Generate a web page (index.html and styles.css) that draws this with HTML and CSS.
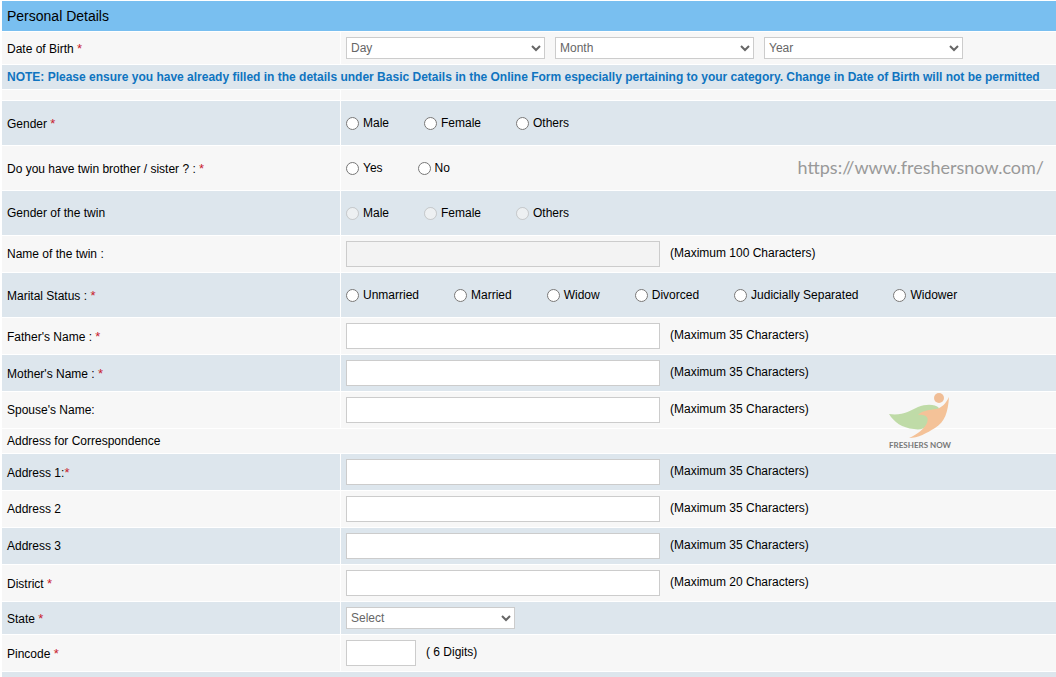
FILE: index.html
```html
<!DOCTYPE html>
<html lang="en">
<head>
<meta charset="utf-8">
<title>Personal Details</title>
<link rel="stylesheet" href="styles.css">
</head>
<body>
<form class="form">
  <h1 class="heading">Personal Details</h1>

  <div class="row">
    <div class="cell name"><label for="day">Date of Birth <span class="req">*</span></label></div>
    <div class="cell field dates">
      <select id="day" class="select" aria-label="Day"><option>Day</option></select>
      <select class="select" aria-label="Month"><option>Month</option></select>
      <select class="select" aria-label="Year"><option>Year</option></select>
    </div>
  </div>

  <p class="cell note">NOTE: Please ensure you have already filled in the details under Basic Details in the Online Form especially pertaining to your category. Change in Date of Birth will not be permitted</p>
  <div class="row spacer"><div class="cell"></div><div class="cell"></div></div>

  <div class="row tint" role="radiogroup" aria-labelledby="gender">
    <div class="cell name" id="gender"><span>Gender <span class="req">*</span></span></div>
    <div class="cell field radios">
      <label class="choice"><input type="radio" name="gender"><span>Male</span></label>
      <label class="choice"><input type="radio" name="gender"><span>Female</span></label>
      <label class="choice"><input type="radio" name="gender"><span>Others</span></label>
    </div>
  </div>

  <div class="row" role="radiogroup" aria-labelledby="twin">
    <div class="cell name" id="twin"><span>Do you have twin brother / sister ? : <span class="req">*</span></span></div>
    <div class="cell field radios">
      <label class="choice"><input type="radio" name="twin"><span>Yes</span></label>
      <label class="choice"><input type="radio" name="twin"><span>No</span></label>
    </div>
    <div class="site">https://www.freshersnow.com/</div>
  </div>

  <div class="row tint" role="radiogroup" aria-labelledby="twin-gender">
    <div class="cell name" id="twin-gender">Gender of the twin</div>
    <div class="cell field radios">
      <label class="choice"><input type="radio" name="twin-gender" disabled><span>Male</span></label>
      <label class="choice"><input type="radio" name="twin-gender" disabled><span>Female</span></label>
      <label class="choice"><input type="radio" name="twin-gender" disabled><span>Others</span></label>
    </div>
  </div>

  <div class="row">
    <div class="cell name"><label for="twin-name">Name of the twin :</label></div>
    <div class="cell field"><input class="text" id="twin-name" type="text" maxlength="100" disabled><span class="hint">(Maximum 100 Characters)</span></div>
  </div>

  <div class="row tint" role="radiogroup" aria-labelledby="marital">
    <div class="cell name" id="marital"><span>Marital Status : <span class="req">*</span></span></div>
    <div class="cell field radios">
      <label class="choice"><input type="radio" name="marital"><span>Unmarried</span></label>
      <label class="choice"><input type="radio" name="marital"><span>Married</span></label>
      <label class="choice"><input type="radio" name="marital"><span>Widow</span></label>
      <label class="choice"><input type="radio" name="marital"><span>Divorced</span></label>
      <label class="choice"><input type="radio" name="marital"><span>Judicially Separated</span></label>
      <label class="choice"><input type="radio" name="marital"><span>Widower</span></label>
    </div>
  </div>

  <div class="row">
    <div class="cell name"><label for="father">Father's Name : <span class="req">*</span></label></div>
    <div class="cell field"><input class="text" id="father" type="text" maxlength="35"><span class="hint">(Maximum 35 Characters)</span></div>
  </div>
  <div class="row tint">
    <div class="cell name"><label for="mother">Mother's Name : <span class="req">*</span></label></div>
    <div class="cell field"><input class="text" id="mother" type="text" maxlength="35"><span class="hint">(Maximum 35 Characters)</span></div>
  </div>
  <div class="row">
    <div class="cell name"><label for="spouse">Spouse's Name:</label></div>
    <div class="cell field"><input class="text" id="spouse" type="text" maxlength="35"><span class="hint">(Maximum 35 Characters)</span></div>
    <div class="brand">
      <svg viewBox="0 0 64 48" width="64" height="48" aria-hidden="true">
        <path fill="#bfdba7" d="M1 22 C14 24 22 19 30 15 C38 12 47 12 51 16 L47 24 L39 34 C36 37 31 38 26 37 C14 36 6 30 1 22 Z"/>
        <path fill="#f4c298" d="M61 5 C60 20 57 30 47 36 C39 41 30 46 21 46 C30 42 36 37 39 31 C41 26 39 22 30 23 C35 18 42 18 48 17 C54 16 58 11 61 5 Z"/>
        <circle cx="51" cy="6" r="5" fill="#f0bd96"/>
      </svg>
      <span class="brand-name">FRESHERS NOW</span>
    </div>
  </div>

  <h2 class="cell section">Address for Correspondence</h2>

  <div class="row tint">
    <div class="cell name"><label for="address1">Address 1:<span class="req">*</span></label></div>
    <div class="cell field"><input class="text" id="address1" type="text" maxlength="35"><span class="hint">(Maximum 35 Characters)</span></div>
  </div>
  <div class="row">
    <div class="cell name"><label for="address2">Address 2</label></div>
    <div class="cell field"><input class="text" id="address2" type="text" maxlength="35"><span class="hint">(Maximum 35 Characters)</span></div>
  </div>
  <div class="row tint">
    <div class="cell name"><label for="address3">Address 3</label></div>
    <div class="cell field"><input class="text" id="address3" type="text" maxlength="35"><span class="hint">(Maximum 35 Characters)</span></div>
  </div>
  <div class="row">
    <div class="cell name"><label for="district">District <span class="req">*</span></label></div>
    <div class="cell field"><input class="text" id="district" type="text" maxlength="20"><span class="hint">(Maximum 20 Characters)</span></div>
  </div>
  <div class="row tint">
    <div class="cell name"><label for="state">State <span class="req">*</span></label></div>
    <div class="cell field"><select class="select state" id="state"><option>Select</option></select></div>
  </div>
  <div class="row">
    <div class="cell name"><label for="pincode">Pincode <span class="req">*</span></label></div>
    <div class="cell field"><input class="text pin" id="pincode" type="text" maxlength="6"><span class="hint">( 6 Digits)</span></div>
  </div>
  <div class="cell end"></div>
</form>
</body>
</html>
```
FILE: styles.css
```css
* {
  box-sizing: border-box;
}

body {
  margin: 0;
  background: #fff;
  color: #000;
  font: 12px/14px "Liberation Sans", Arial, sans-serif;
}

.form {
  display: flex;
  flex-direction: column;
  gap: 1px;
  padding: 1px 0 0 2px;
}

.heading {
  margin: 0;
  padding: 5px;
  background: #79bff0;
  font-size: 14px;
  font-weight: normal;
  line-height: 20px;
}

.row {
  position: relative;
  display: grid;
  grid-template-columns: 338px 1fr;
  gap: 1px;
}

.cell {
  padding: 5px;
  background: #f7f7f7;
}

.tint .cell,
.note,
.end {
  background: #dde6ed;
}

.name,
.field {
  display: flex;
  align-items: center;
}

.name:has(.req) {
  padding-top: 7px;
}

.req {
  color: #c8202c;
  font-size: 13px;
  line-height: 12px;
}

.note {
  margin: 0;
  color: #0f74c0;
  font-weight: bold;
}

.section {
  margin: 0;
  font-size: 12px;
  font-weight: normal;
}

.end {
  height: 5px;
  padding: 0;
}

.dates {
  gap: 10px;
}

.select {
  width: 199px;
  height: 22px;
  border: 1px solid #ccc;
  border-radius: 0;
  background-color: #fff;
  color: #666;
  font: inherit;
}

.state {
  width: 169px;
}

.text {
  width: 314px;
  height: 26px;
  border: 1px solid #ccc;
  background: #fff;
  font: inherit;
}

.text:disabled {
  background: #f3f3f3;
}

.pin {
  width: 70px;
}

.hint {
  padding: 0 10px 2px;
}

.radios {
  gap: 35px;
  padding: 15px 5px 14px;
}

.choice {
  display: flex;
  align-items: center;
  gap: 4px;
}

.choice input {
  width: 13px;
  height: 13px;
  margin: 0;
}

.choice span {
  padding-bottom: 1px;
}

.site {
  position: absolute;
  right: 12px;
  top: 9px;
  color: #999;
  font: 18px/24px Lato, sans-serif;
}

.brand {
  position: absolute;
  right: 104px;
  top: 0;
  display: flex;
  flex-direction: column;
  align-items: center;
  z-index: 1;
}

.brand-name {
  color: #777;
  font: bold 8px/10px Lato, sans-serif;
}
```
